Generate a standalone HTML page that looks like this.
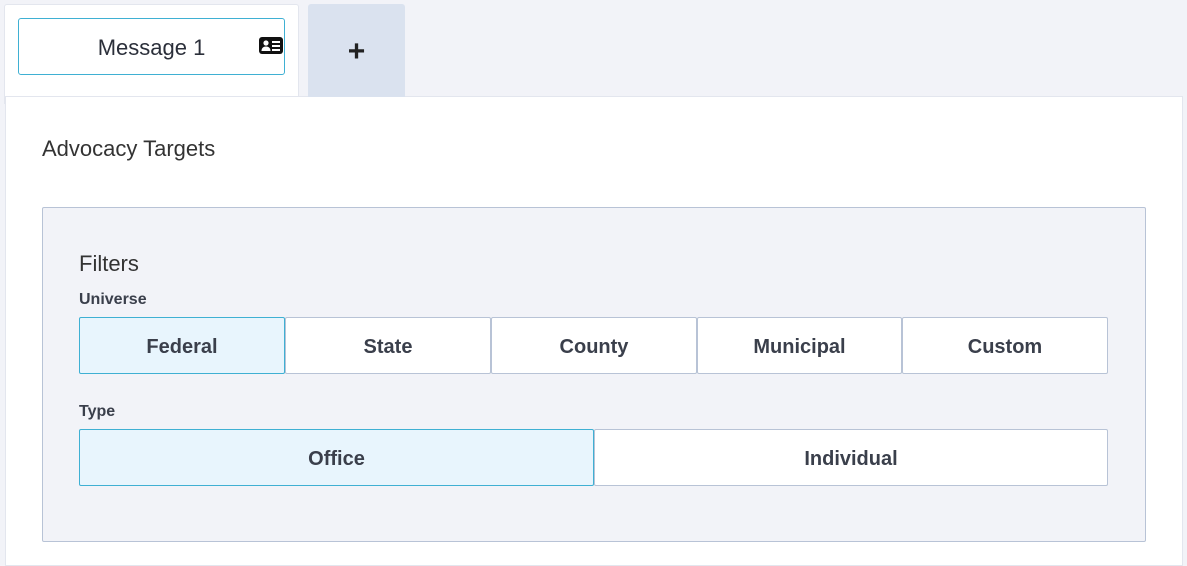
<!DOCTYPE html>
<html><head><meta charset="utf-8"><style>
*{box-sizing:border-box;margin:0;padding:0}
body{width:1187px;height:556px;background:#f2f3f8;font-family:"Liberation Sans",sans-serif;color:#2f3543;position:relative;overflow:hidden}
.tab{position:absolute;left:4px;top:4px;width:295px;height:100px;background:#fff;border:1px solid #e3e6ee;border-bottom:none;border-radius:3px 3px 0 0}
.inp{position:absolute;left:18px;top:18px;width:267px;height:57px;border:1px solid #3fb0d3;border-radius:3px;background:#fff;font-size:22px;color:#2b2f3a;text-align:center;line-height:57px}
.plus{position:absolute;left:308px;top:4px;width:97px;height:93px;background:#dae2ef;border-radius:3px 3px 0 0;font-size:30px;font-weight:bold;text-align:center;line-height:96px;color:#222}
.panel{position:absolute;left:5px;top:96px;width:1178px;height:470px;background:#fff;border:1px solid #e3e6ee}
.h{position:absolute;left:42px;top:136px;font-size:22px;color:#333}
.box{position:absolute;left:42px;top:207px;width:1104px;height:335px;background:#f2f3f8;border:1px solid #b8c3d6;border-radius:2px}
.f{position:absolute;left:79px;top:251px;font-size:22px;color:#333}
.lbl{position:absolute;left:79px;font-size:16px;font-weight:bold;color:#3a3f4b}
.btn{position:absolute;height:57px;background:#fff;border:1px solid #b8c3d6;border-radius:2px;font-size:20px;font-weight:bold;text-align:center;line-height:59px;color:#3a3f4b}
.on{background:#e8f5fd;border-color:#3fb0d3}
</style></head><body>
<div class="tab"></div>
<div class="panel"></div>
<div class="inp">Message 1</div>
<svg style="position:absolute;left:259px;top:37px" width="24" height="17" viewBox="0 0 24 17"><rect x="0" y="0" width="24" height="17" rx="3" fill="#111"/><circle cx="7" cy="6" r="2.6" fill="#fff"/><path d="M2.5 14c0-3 2-4.5 4.5-4.5s4.5 1.5 4.5 4.5z" fill="#fff"/><rect x="13" y="4" width="8" height="2" fill="#fff"/><rect x="13" y="8" width="8" height="2" fill="#fff"/><rect x="13" y="12" width="8" height="2" fill="#fff"/></svg>
<div class="plus">+</div>
<div class="h">Advocacy Targets</div>
<div class="box"></div>
<div class="f">Filters</div>
<div class="lbl" style="top:291px">Universe</div>
<div class="btn on" style="left:79px;top:317px;width:206px">Federal</div>
<div class="btn" style="left:285px;top:317px;width:206px">State</div>
<div class="btn" style="left:491px;top:317px;width:206px">County</div>
<div class="btn" style="left:697px;top:317px;width:205px">Municipal</div>
<div class="btn" style="left:902px;top:317px;width:206px">Custom</div>
<div class="lbl" style="top:403px">Type</div>
<div class="btn on" style="left:79px;top:429px;width:515px">Office</div>
<div class="btn" style="left:594px;top:429px;width:514px">Individual</div>
</body></html>
